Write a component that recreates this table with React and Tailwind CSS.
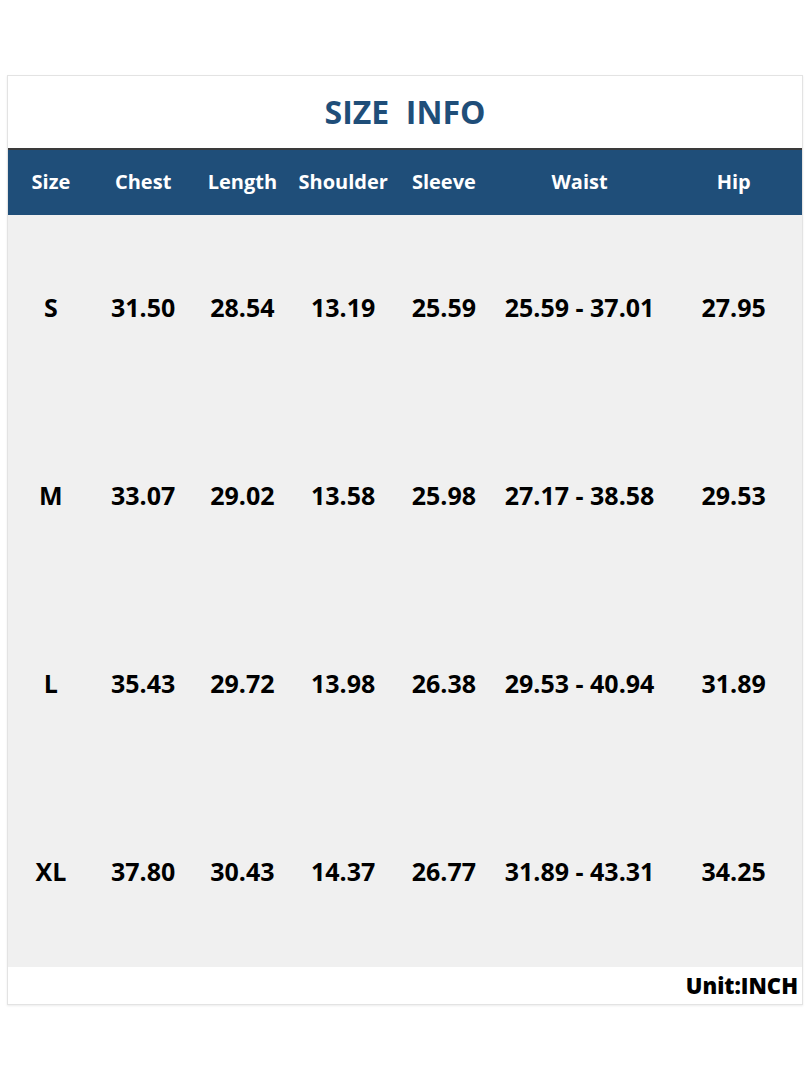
// Size chart card: title, blue header row, gray body, unit footer
const columns = [
  { label: 'Size', width: 'w-[86px]' },
  { label: 'Chest', width: 'w-[99px]' },
  { label: 'Length', width: 'w-[100px]' },
  { label: 'Shoulder', width: 'w-[102px]' },
  { label: 'Sleeve', width: 'w-[100px]' },
  { label: 'Waist', width: 'w-[172px]' },
  { label: 'Hip', width: 'w-[137px]' },
];

const rows = [
  ['S', '31.50', '28.54', '13.19', '25.59', '25.59 - 37.01', '27.95'],
  ['M', '33.07', '29.02', '13.58', '25.98', '27.17 - 38.58', '29.53'],
  ['L', '35.43', '29.72', '13.98', '26.38', '29.53 - 40.94', '31.89'],
  ['XL', '37.80', '30.43', '14.37', '26.77', '31.89 - 43.31', '34.25'],
];

export default function App() {
  return (
    <div className="min-h-[1080px] w-[810px] bg-white pt-[75px] pl-[7px] font-['Open_Sans',sans-serif]">
      <div className="w-[796px] border border-[#e3e3e3] shadow-[0_1px_2px_rgba(0,0,0,0.08)]">
        <div className="flex h-[72px] items-center justify-center">
          <h1 className="whitespace-pre text-[32px] font-bold leading-none text-[#1f4e79]">SIZE  INFO</h1>
        </div>
        <div className="flex h-[67px] items-center border-t-2 border-[#3a3a3a] bg-[#1f4e79] text-white">
          {columns.map((c) => (
            <div key={c.label} className={`${c.width} pb-[2px] text-center text-[20px] font-bold`}>
              {c.label}
            </div>
          ))}
        </div>
        <div className="bg-[#f0f0f0]">
          {rows.map((r) => (
            <div key={r[0]} className="flex h-[188px] items-center text-black">
              {r.map((v, i) => (
                <div key={i} className={`${columns[i].width} pb-[2px] text-center text-[25px] font-bold`}>
                  {v}
                </div>
              ))}
            </div>
          ))}
        </div>
        <div className="flex h-[37px] items-center justify-end pr-[4px]">
          <span className="text-[22px] font-extrabold text-black">Unit:INCH</span>
        </div>
      </div>
    </div>
  );
}
